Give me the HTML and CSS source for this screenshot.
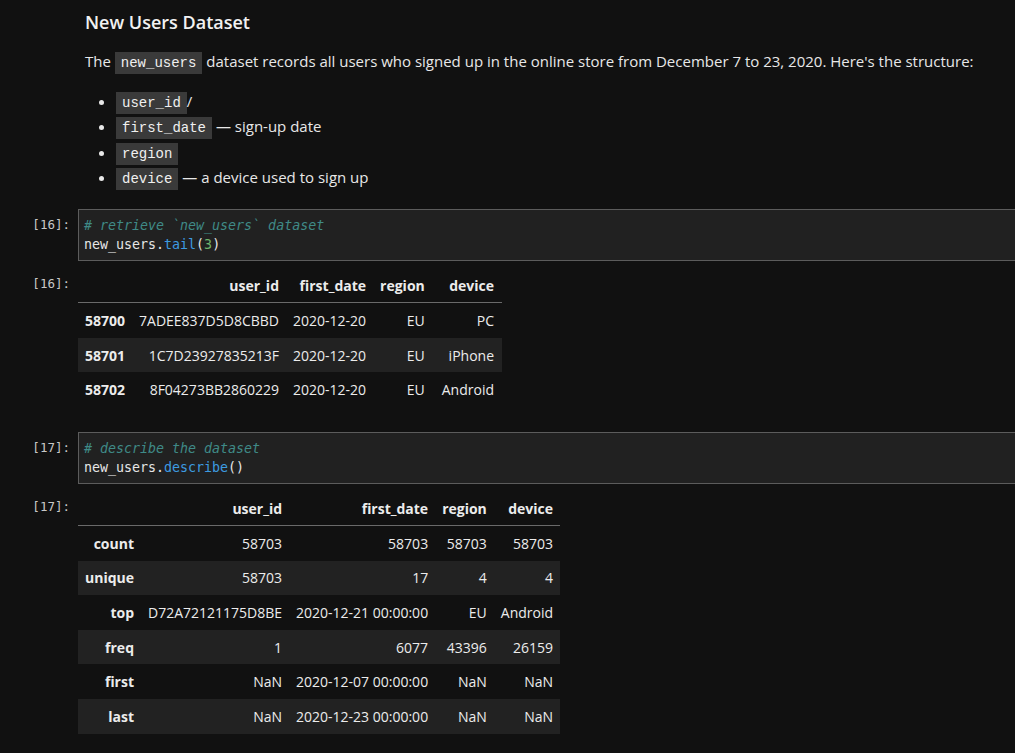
FILE: index.html
```html
<!DOCTYPE html>
<html>
<head>
<meta charset="utf-8">
<link rel="stylesheet" href="styles.css">
</head>
<body>
<div class="notebook">
  <div class="cell md">
    <div class="prompt"></div>
    <div class="md-body">
      <h2>New Users Dataset</h2>
      <p>The <code>new_users</code> dataset records all users who signed up in the online store from December 7 to 23, 2020. Here's the structure:</p>
      <ul>
        <li><code>user_id</code>/</li>
        <li><code>first_date</code> — sign-up date</li>
        <li><code>region</code></li>
        <li><code>device</code> — a device used to sign up</li>
      </ul>
    </div>
  </div>

  <div class="cell code-cell">
    <div class="prompt">[16]:</div>
    <pre class="code"><span class="c"># retrieve `new_users` dataset</span>
new_users.<span class="f">tail</span>(<span class="n">3</span>)</pre>
  </div>
  <div class="cell out-cell">
    <div class="prompt">[16]:</div>
    <table class="df t1">
      <thead>
        <tr><th></th><th>user_id</th><th>first_date</th><th>region</th><th>device</th></tr>
      </thead>
      <tbody>
        <tr><th>58700</th><td>7ADEE837D5D8CBBD</td><td>2020-12-20</td><td>EU</td><td>PC</td></tr>
        <tr><th>58701</th><td>1C7D23927835213F</td><td>2020-12-20</td><td>EU</td><td>iPhone</td></tr>
        <tr><th>58702</th><td>8F04273BB2860229</td><td>2020-12-20</td><td>EU</td><td>Android</td></tr>
      </tbody>
    </table>
  </div>

  <div class="cell code-cell">
    <div class="prompt">[17]:</div>
    <pre class="code"><span class="c"># describe the dataset</span>
new_users.<span class="f">describe</span>()</pre>
  </div>
  <div class="cell out-cell">
    <div class="prompt">[17]:</div>
    <table class="df t2">
      <thead>
        <tr><th></th><th>user_id</th><th>first_date</th><th>region</th><th>device</th></tr>
      </thead>
      <tbody>
        <tr><th>count</th><td>58703</td><td>58703</td><td>58703</td><td>58703</td></tr>
        <tr><th>unique</th><td>58703</td><td>17</td><td>4</td><td>4</td></tr>
        <tr><th>top</th><td>D72A72121175D8BE</td><td>2020-12-21 00:00:00</td><td>EU</td><td>Android</td></tr>
        <tr><th>freq</th><td>1</td><td>6077</td><td>43396</td><td>26159</td></tr>
        <tr><th>first</th><td>NaN</td><td>2020-12-07 00:00:00</td><td>NaN</td><td>NaN</td></tr>
        <tr><th>last</th><td>NaN</td><td>2020-12-23 00:00:00</td><td>NaN</td><td>NaN</td></tr>
      </tbody>
    </table>
  </div>
</div>
</body>
</html>
```

FILE: styles.css
```css
html, body {
  margin: 0;
  padding: 0;
  background: #111111;
  color: #e8e8e8;
  font-family: "Open Sans", "Noto Sans", sans-serif;
  overflow: hidden;
}

.notebook {
  padding-top: 10px;
}

.cell {
  display: grid;
  grid-template-columns: 70px 1fr;
  column-gap: 8px;
}

.prompt {
  font-family: "DejaVu Sans Mono", monospace;
  font-size: 12.5px;
  color: #c8c8c8;
  text-align: right;
  line-height: 18px;
}

.md-body {
  padding-left: 7px;
}

h2 {
  margin: 0;
  font-size: 18px;
  font-weight: 600;
  line-height: 24px;
  color: #f2f2f2;
}

p {
  margin: 16px 0 0;
  font-size: 15px;
  line-height: 22px;
}

code {
  font-family: "Liberation Mono", monospace;
  font-size: 14px;
  line-height: 16px;
  background: #3a3a3a;
  padding: 3px 6px;
  color: #f0f0f0;
}

ul {
  margin: 17px 0 0;
  padding-left: 31px;
  font-size: 15px;
  list-style: disc;
}

li {
  line-height: 25.3px;
}

.code-cell {
  margin-top: 25px;
}

.md + .code-cell {
  margin-top: 19px;
}

.code {
  margin: 0 -4px 0 0;
  background: #212121;
  border: 1px solid #5c5c5c;
  padding: 6px 5px 6px;
  font-family: "DejaVu Sans Mono", monospace;
  font-size: 13.3px;
  line-height: 19px;
  color: #e6e6e6;
}

.code-cell .prompt {
  padding-top: 7px;
}

.c { color: #3f8a87; font-style: italic; }
.f { color: #3d9be0; }
.n { color: #6fb46c; }

.out-cell {
  margin-top: 8px;
}

.out-cell .prompt {
  padding-top: 6px;
}

.df {
  border-collapse: collapse;
  font-size: 14px;
  color: #ececec;
  justify-self: start;
}

.df th, .df td {
  text-align: right;
  padding: 0 7px;
  height: 34.6px;
  white-space: nowrap;
}

.df thead th {
  font-weight: 700;
  height: 33px;
  border-bottom: 1px solid #6a6a6a;
}

.df tbody th {
  font-weight: 700;
}

.df tbody tr:nth-child(even) {
  background: #222222;
}

.t1 td:last-child, .t1 th:last-child {
  padding-right: 8px;
  padding-left: 10px;
}
```
